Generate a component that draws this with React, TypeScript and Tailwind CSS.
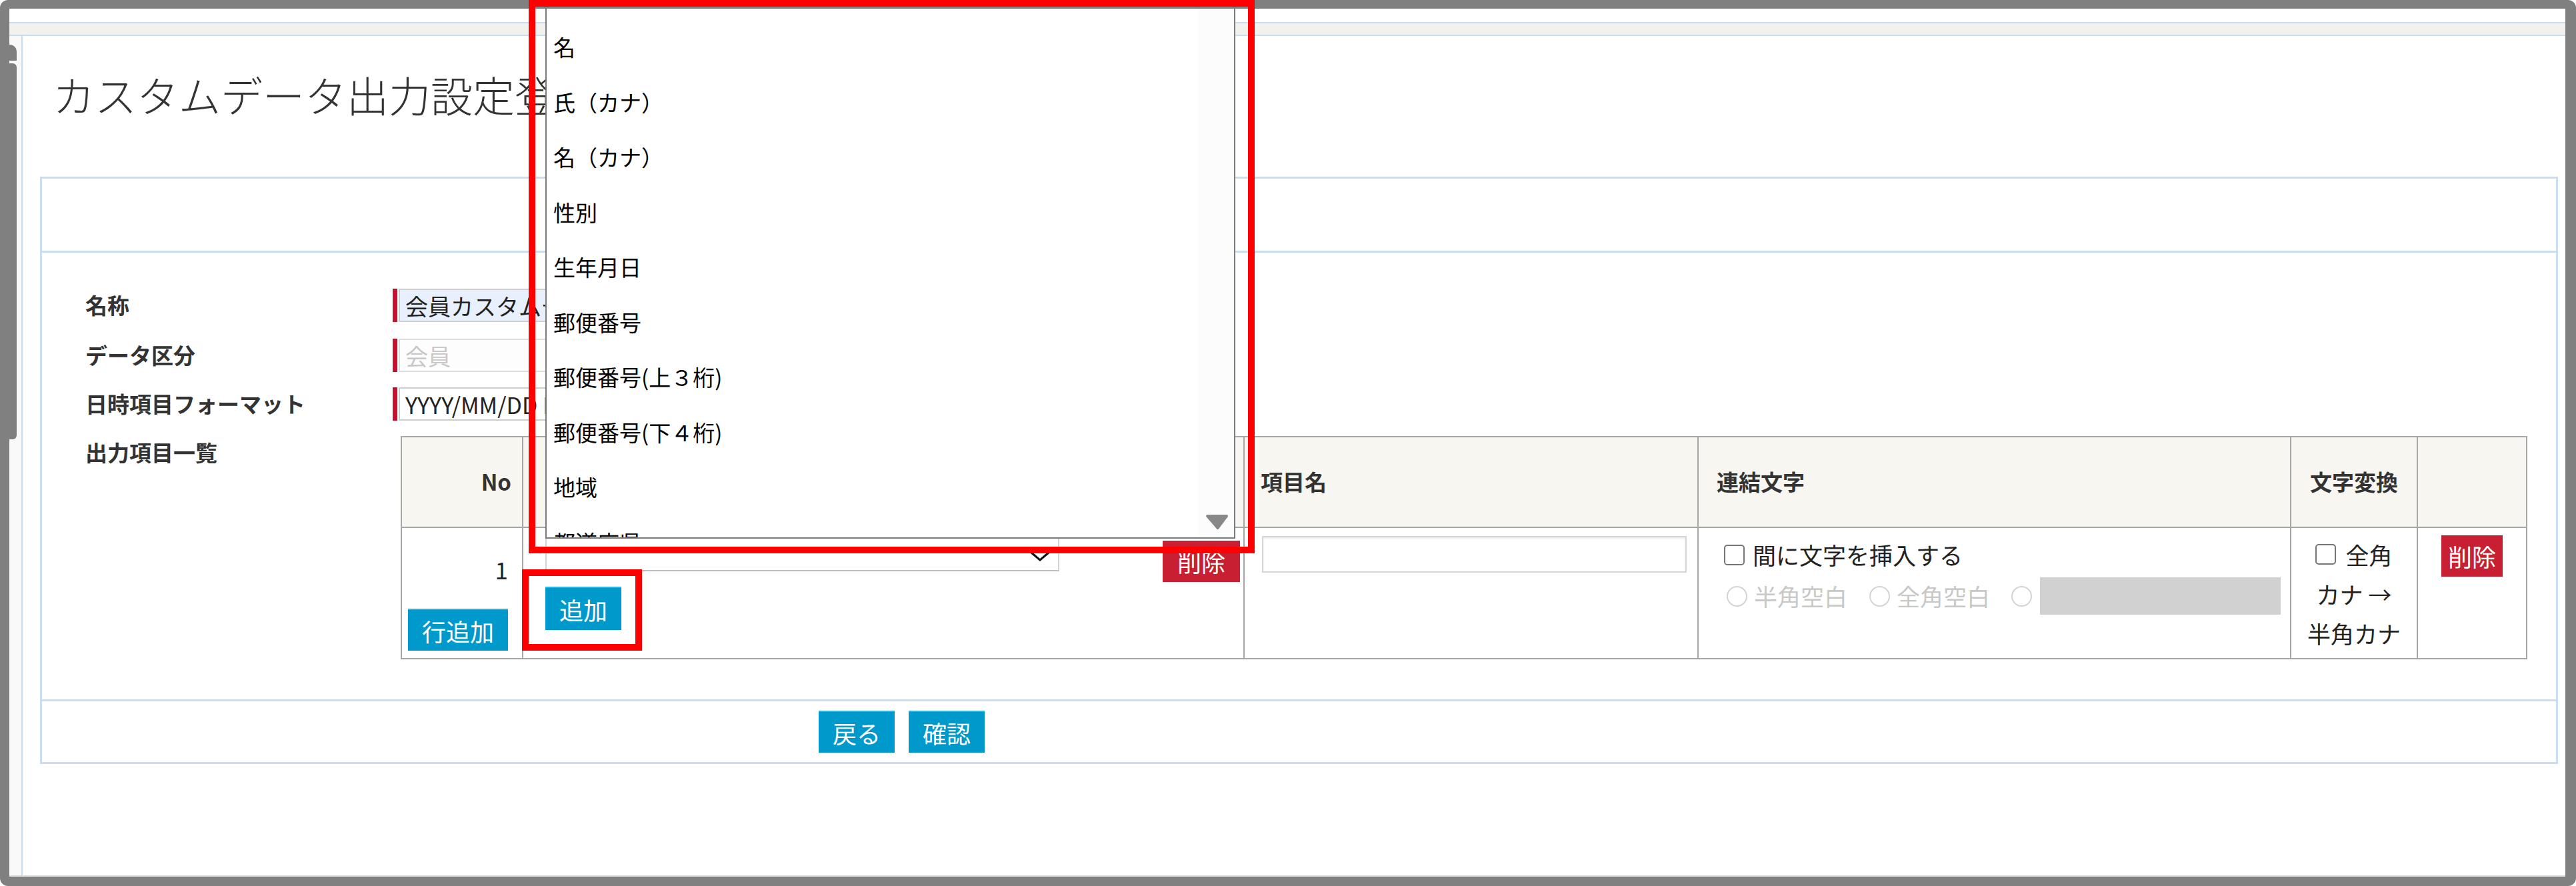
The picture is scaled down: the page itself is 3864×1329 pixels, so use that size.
import React from "react";

const options = [
  "名",
  "氏（カナ）",
  "名（カナ）",
  "性別",
  "生年月日",
  "郵便番号",
  "郵便番号(上３桁)",
  "郵便番号(下４桁)",
  "地域",
  "都道府県",
];

function BlueButton({ label, className = "" }: { label: string; className?: string }) {
  return (
    <span
      className={
        "inline-flex items-center justify-center h-[63px] px-[21px] bg-[#0099cc] border-t-2 border-[#33b3dd] text-white text-[36px] leading-none " +
        className
      }
    >
      {label}
    </span>
  );
}

function RedButton({ className = "" }: { className?: string }) {
  return (
    <span
      className={
        "inline-flex items-center justify-center h-[62px] bg-[#c91f32] text-white text-[36px] leading-none " +
        className
      }
    >
      削除
    </span>
  );
}

function Checkbox() {
  return (
    <span className="inline-block w-[31px] h-[31px] shrink-0 rounded-[5px] border-2 border-[#767676] bg-white" />
  );
}

function Radio() {
  return (
    <span className="inline-block w-[31px] h-[31px] shrink-0 rounded-full border-2 border-[#d4d4d4] bg-white" />
  );
}

function FieldRow({
  label,
  children,
  className = "",
}: {
  label: string;
  children: React.ReactNode;
  className?: string;
}) {
  return (
    <div className={"flex items-center h-[50px] " + className}>
      <div className="w-[461px] shrink-0 text-[33px] font-bold text-[#333]">{label}</div>
      <span className="w-[7px] h-[50px] bg-[#c8102e]" />
      {children}
    </div>
  );
}

export default function App() {
  return (
    <div className="relative w-[3864px] h-[1329px] overflow-hidden bg-white text-[#222] font-['Noto_Sans_CJK_JP','Noto_Sans',sans-serif]">
      {/* screenshot frame */}
      <div className="flex flex-col w-full h-full rounded-[12px] border-[#808080] border-t-[13px] border-l-[14px] border-r-[16px] border-b-[14px] bg-white">
        <div className="h-[20px] shrink-0" />
        <div className="h-[21px] shrink-0 border-y-2 border-[#c6dcf2] bg-[#f2f1ed]" />

        <div className="flex flex-1 border-b-2 border-[#dddddd]">
          {/* left tab */}
          <div className="w-[18px] shrink-0 flex flex-col bg-[#f9f9f9]">
            <div className="mt-[13px] h-[24px] w-[11px] rounded-tr-[10px] bg-[#7f7f7f]" />
            <div className="mt-[4px] h-[564px] w-[11px] rounded-r-[6px] bg-[#7f7f7f]" />
          </div>

          <div className="flex-1 flex flex-col border-l-2 border-[#c6dcf2]">
            <h1 className="mt-[40px] pl-[45px] text-[63px] leading-[93px] font-light text-[#333] whitespace-nowrap">
              カスタムデータ出力設定登録
            </h1>

            <div className="mt-[78px] ml-[26px] mr-[11px] border-[3px] border-[#c8ddf2]">
              <div className="h-[111px] border-b-[3px] border-[#c8ddf2]" />

              {/* form */}
              <div className="pl-[65px] pt-[54px] pb-[60px] border-b-[3px] border-[#c8ddf2]">
                <FieldRow label="名称">
                  <div className="ml-[2px] h-[50px] w-[520px] flex items-center px-[8px] border-2 border-[#cfcfcf] bg-[#e8f0fe] text-[34px] text-[#222] whitespace-nowrap overflow-hidden">
                    会員カスタムデータ出力
                  </div>
                </FieldRow>
                <FieldRow label="データ区分" className="mt-[25px]">
                  <div className="ml-[2px] h-[50px] w-[520px] flex items-center px-[8px] border-2 border-[#dedede] bg-[#fdfdfd] text-[34px] text-[#c8c8c8]">
                    会員
                  </div>
                </FieldRow>
                <FieldRow label="日時項目フォーマット" className="mt-[23px]">
                  <div className="ml-[2px] h-[50px] w-[520px] flex items-center px-[8px] border-2 border-[#cfcfcf] bg-white text-[34px] text-[#222] whitespace-nowrap overflow-hidden">
                    YYYY/MM/DD HH:mm:ss
                  </div>
                </FieldRow>

                <div className="flex items-start mt-[23px]">
                  <div className="w-[461px] shrink-0 text-[33px] leading-[48px] font-bold text-[#333]">
                    出力項目一覧
                  </div>
                  <table className="ml-[12px] w-[3188px] table-fixed border-collapse">
                    <colgroup>
                      <col className="w-[182px]" />
                      <col className="w-[1082px]" />
                      <col className="w-[681px]" />
                      <col className="w-[889px]" />
                      <col className="w-[190px]" />
                      <col className="w-[164px]" />
                    </colgroup>
                    <thead>
                      <tr className="h-[136px] bg-[#f8f6f0] text-[33px] font-bold text-[#333]">
                        <th className="border-2 border-[#a6a6a6] text-right pr-[16px]">No</th>
                        <th className="border-2 border-[#a6a6a6]" />
                        <th className="border-2 border-[#a6a6a6] text-left pl-[24px]">項目名</th>
                        <th className="border-2 border-[#a6a6a6] text-left pl-[27px]">連結文字</th>
                        <th className="border-2 border-[#a6a6a6] text-center">文字変換</th>
                        <th className="border-2 border-[#a6a6a6]" />
                      </tr>
                    </thead>
                    <tbody>
                      <tr className="h-[197px] text-[35px]">
                        <td className="border-2 border-[#a6a6a6] align-top pt-[40px] pr-[21px]">
                          <div className="flex flex-col items-end">
                            <div className="leading-[44px]">1</div>
                            <BlueButton label="行追加" className="mt-[37px]" />
                          </div>
                        </td>
                        <td className="border-2 border-[#a6a6a6] align-top pt-[12px] pl-[33px]">
                          <div className="flex items-start">
                            <div className="w-[771px] h-[53px] flex items-center justify-end pr-[12px] pt-[8px] border-2 border-[#d4d4d4] border-b-[#bdbdbd] bg-white">
                              <svg width="30" height="15" viewBox="0 0 30 15">
                                <polyline points="2,2 15,13 28,2" fill="none" stroke="#111" strokeWidth="3" />
                              </svg>
                            </div>
                            <RedButton className="ml-[155px] mt-[7px] px-[22px]" />
                          </div>
                          <div className="mt-[7px]">
                            <BlueButton label="追加" className="h-[65px]" />
                          </div>
                        </td>
                        <td className="border-2 border-[#a6a6a6] align-top pt-[12px] pl-[26px] pr-[16px]">
                          <div className="w-full h-[55px] border-2 border-[#d6d6d6] bg-white shadow-[inset_0_2px_3px_rgba(0,0,0,0.08)]" />
                        </td>
                        <td className="border-2 border-[#a6a6a6] align-top pt-[17px] pl-[38px]">
                          <div className="flex items-center h-[46px]">
                            <Checkbox />
                            <span className="ml-[12px] whitespace-nowrap">間に文字を挿入する</span>
                          </div>
                          <div className="flex items-center h-[56px] mt-[11px] text-[#c8c8c8] whitespace-nowrap">
                            <span className="ml-[4px]" />
                            <Radio />
                            <span className="ml-[10px]">半角空白</span>
                            <span className="ml-[33px]" />
                            <Radio />
                            <span className="ml-[10px]">全角空白</span>
                            <span className="ml-[32px]" />
                            <Radio />
                            <span className="ml-[12px] w-[361px] h-[56px] bg-[#d1d1d1]" />
                          </div>
                        </td>
                        <td className="border-2 border-[#a6a6a6] align-top pt-[10px] text-center leading-[59px]">
                          <div className="flex items-center justify-center">
                            <Checkbox />
                            <span className="ml-[14px]">全角</span>
                          </div>
                          <div>カナ →</div>
                          <div>半角カナ</div>
                        </td>
                        <td className="border-2 border-[#a6a6a6] align-top pt-[11px] text-center">
                          <RedButton className="px-[10px]" />
                        </td>
                      </tr>
                    </tbody>
                  </table>
                </div>
              </div>

              {/* footer */}
              <div className="h-[91px] flex items-center gap-[21px] pl-[1165px]">
                <BlueButton label="戻る" />
                <BlueButton label="確認" />
              </div>
            </div>
          </div>
        </div>
      </div>

      {/* open select list */}
      <div className="absolute left-[818px] top-[13px] w-[1035px] h-[795px] overflow-hidden border-x-2 border-b-2 border-[#7b7b7b] bg-white">
        <div className="absolute right-0 top-0 bottom-0 w-[54px] bg-[#fcfcfc]">
          <svg className="absolute left-[11px] bottom-[11px]" width="35" height="24" viewBox="0 0 35 24">
            <path d="M3 3 H32 L18.5 21 Z" fill="#888" stroke="#888" strokeWidth="4" strokeLinejoin="round" />
          </svg>
        </div>
        <div className="pt-[16px] pl-[10px] text-[33px] text-black">
          {options.map((o) => (
            <div key={o} className="h-[82.5px] leading-[82.5px] whitespace-nowrap">
              {o}
            </div>
          ))}
        </div>
      </div>

      {/* red annotation boxes */}
      <div className="absolute left-[793px] top-0 w-[1089px] h-[830px] border-[10px] border-[#ff0000]" />
      <div className="absolute left-[783px] top-[854px] w-[180px] h-[122px] border-[10px] border-[#ff0000]" />
    </div>
  );
}
